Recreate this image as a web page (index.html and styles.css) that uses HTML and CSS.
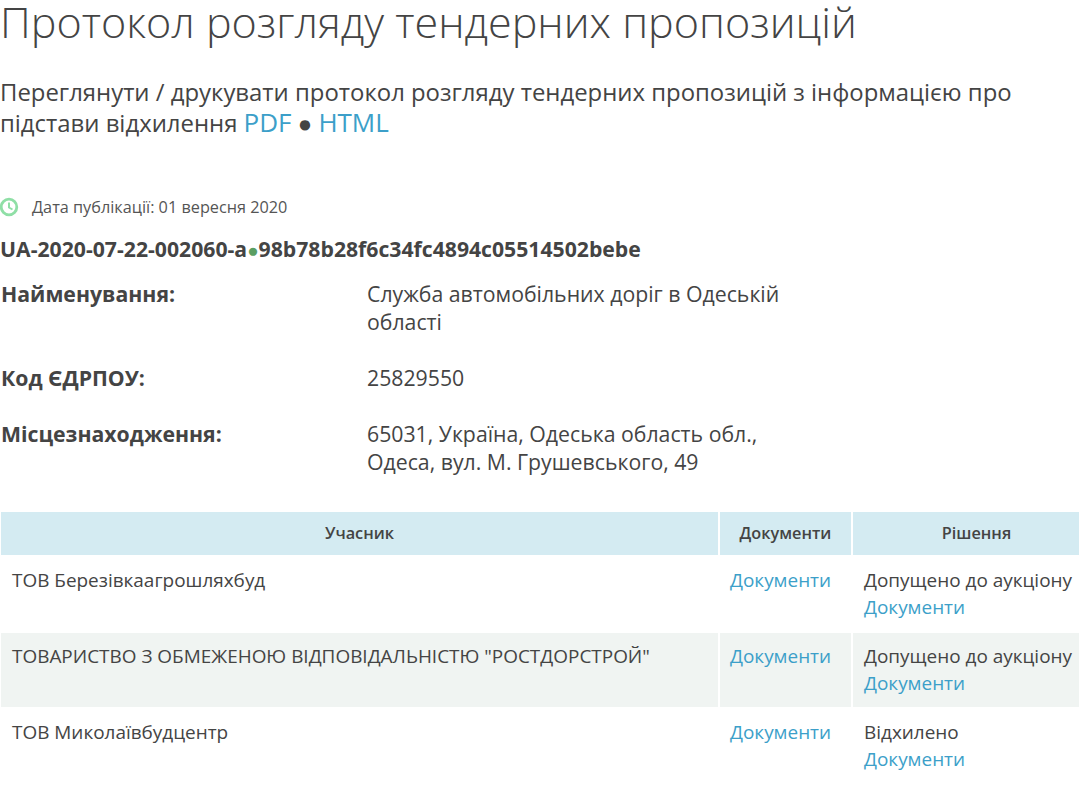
FILE: index.html
```
<!DOCTYPE html>
<html lang="uk">
<head>
<meta charset="utf-8">
<title>Протокол</title>
<link rel="stylesheet" href="styles.css">
</head>
<body>
<h1 class="title">Протокол розгляду тендерних пропозицій</h1>
<p class="lead">Переглянути / друкувати протокол розгляду тендерних пропозицій з інформацією про підстави відхилення <a href="#">PDF</a> ● <a href="#">HTML</a></p>
<div class="date">
<svg class="clock" viewBox="0 0 20 20" width="20" height="20"><circle cx="9" cy="10" r="7.8" fill="none" stroke="#8fdfa6" stroke-width="2.8"/><path d="M9 5.5V10.5L12.5 12.5" fill="none" stroke="#8fdfa6" stroke-width="2"/></svg>
<span>Дата публікації: 01 вересня 2020</span>
</div>
<div class="uid">UA-2020-07-22-002060-a<span class="dot">●</span>98b78b28f6c34fc4894c05514502bebe</div>
<dl class="info">
<dt>Найменування:</dt><dd>Служба автомобільних доріг в Одеській області</dd>
<dt>Код ЄДРПОУ:</dt><dd>25829550</dd>
<dt>Місцезнаходження:</dt><dd>65031, Україна, Одеська область обл., Одеса, вул. М. Грушевського, 49</dd>
</dl>
<table class="bids">
<thead><tr><th class="c1">Учасник</th><th class="c2">Документи</th><th class="c3">Рішення</th></tr></thead>
<tbody>
<tr><td>ТОВ Березівкаагрошляхбуд</td><td class="docs"><a href="#">Документи</a></td><td>Допущено до аукціону<br><a href="#">Документи</a></td></tr>
<tr><td>ТОВАРИСТВО З ОБМЕЖЕНОЮ ВІДПОВІДАЛЬНІСТЮ "РОСТДОРСТРОЙ"</td><td class="docs"><a href="#">Документи</a></td><td>Допущено до аукціону<br><a href="#">Документи</a></td></tr>
<tr><td>ТОВ Миколаївбудцентр</td><td class="docs"><a href="#">Документи</a></td><td>Відхилено<br><a href="#">Документи</a></td></tr>
</tbody>
</table>
</body>
</html>
```
FILE: styles.css
```
html, body { margin: 0; padding: 0; background: #fff; }
body { font-family: "Open Sans", sans-serif; color: #444; height: 785px; overflow: hidden; }
a { color: #3c9fc9; text-decoration: none; }
.title { margin: 0; font-size: 43.1px; font-weight: 300; line-height: 44px; height: 48px; }
.lead { margin: 28px 0 0; font-size: 23.9px; line-height: 31px; }
.lead a { font-size: 26px; }
.date { display: flex; align-items: center; gap: 12px; margin-top: 58px; font-size: 16.25px; height: 22px; color: #555; }
.uid { margin-top: 17px; font-weight: 700; font-size: 21.2px; line-height: 28px; }
.dot { color: #5a9e62; font-size: 19px; }
.info { display: grid; grid-template-columns: 367px 420px; margin: 16px 0 0; font-size: 21.25px; line-height: 28px; }
.info dt { font-weight: 700; padding-left: 1px; margin-bottom: 28px; }
.info dd { margin: 0 0 28px; }
.bids { border-collapse: separate; border-spacing: 2px; table-layout: fixed; width: 1103px; margin: 6px 0 0 -1px; font-size: 18.95px; line-height: 27px; }
.bids th { background: #d4ebf2; font-size: 16.3px; font-weight: 600; height: 43px; padding: 0; }
.bids td { padding: 10px 0 10px 11px; vertical-align: top; height: 54px; }
.bids td.docs { padding-left: 10px; }
.bids tr:nth-child(2) td { background: #f0f4f2; }
.c1 { width: 717px; }
.c2 { width: 131px; }
```
